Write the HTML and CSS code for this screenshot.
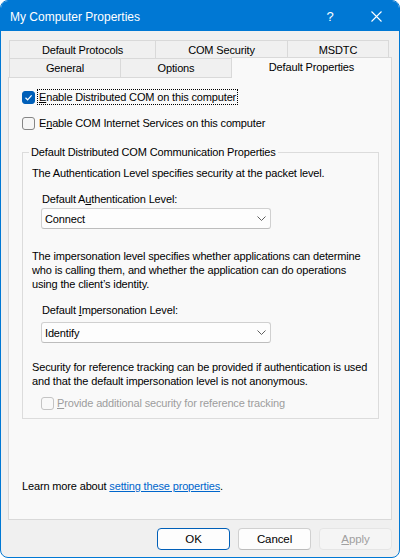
FILE: index.html
```html
<!DOCTYPE html>
<html>
<head>
<meta charset="utf-8">
<title>My Computer Properties</title>
<link rel="stylesheet" href="styles.css">
</head>
<body>
<div class="window">
  <div class="titlebar">
    <span class="title">My Computer Properties</span>
    <span class="cap-btn help">?</span>
    <span class="cap-btn close"><svg width="11" height="11" viewBox="0 0 11 11"><path d="M0.5 0.5 L10.5 10.5 M10.5 0.5 L0.5 10.5" stroke="#ffffff" stroke-width="1.1" fill="none"/></svg></span>
  </div>

  <div class="tabs">
    <div class="tabrow row1">
      <div class="tab t-protocols">Default Protocols</div>
      <div class="tab t-security">COM Security</div>
      <div class="tab t-msdtc">MSDTC</div>
    </div>
    <div class="tabrow row2">
      <div class="tab t-general">General</div>
      <div class="tab t-options">Options</div>
      <div class="tab t-default selected">Default Properties</div>
    </div>
  </div>

  <div class="panel">
    <div class="check-row first">
      <span class="cb checked"><svg width="11" height="11" viewBox="0 0 11 11"><path d="M2.5 5.8 L4.6 7.8 L8.6 3.3" stroke="#ffffff" stroke-width="1.2" fill="none"/></svg></span>
      <span class="cb-label focus"><u>E</u>nable Distributed COM on this computer</span>
    </div>
    <div class="check-row second">
      <span class="cb"></span>
      <span class="cb-label">E<u>n</u>able COM Internet Services on this computer</span>
    </div>

    <fieldset class="group">
      <legend>Default Distributed COM Communication Properties</legend>
      <div class="group-body">
        <p class="text p-auth">The Authentication Level specifies security at the packet level.</p>
        <div class="field-label l-auth">Default A<u>u</u>thentication Level:</div>
        <div class="select s-auth">
          <span>Connect</span>
          <svg class="chev" width="9" height="5" viewBox="0 0 9 5"><path d="M0.5 0.5 L4.5 4.5 L8.5 0.5" stroke="#5f5f5f" stroke-width="1" fill="none"/></svg>
        </div>
        <p class="text p-imp">The impersonation level specifies whether applications can determine<br>who is calling them, and whether the application can do operations<br>using the client’s identity.</p>
        <div class="field-label l-imp">Default <u>I</u>mpersonation Level:</div>
        <div class="select s-imp">
          <span>Identify</span>
          <svg class="chev" width="9" height="5" viewBox="0 0 9 5"><path d="M0.5 0.5 L4.5 4.5 L8.5 0.5" stroke="#5f5f5f" stroke-width="1" fill="none"/></svg>
        </div>
        <p class="text p-sec">Security for reference tracking can be provided if authentication is used<br>and that the default impersonation level is not anonymous.</p>
        <div class="check-row disabled">
          <span class="cb"></span>
          <span class="cb-label"><u>P</u>rovide additional security for reference tracking</span>
        </div>
      </div>
    </fieldset>

    <p class="learn">Learn more about <a class="link" href="#">setting these properties</a>.</p>
  </div>

  <div class="buttons">
    <button class="btn default">OK</button>
    <button class="btn">Cancel</button>
    <button class="btn disabled"><u>A</u>pply</button>
  </div>
</div>
</body>
</html>
```

FILE: styles.css
```css
html, body {
  margin: 0;
  padding: 0;
  background: #ffffff;
}

body {
  font-family: "Liberation Sans", Arial, sans-serif;
  font-size: 11px;
  letter-spacing: -0.15px;
  color: #000000;
}

.window {
  width: 400px;
  height: 558px;
  box-sizing: border-box;
  border: 1px solid #0078d4;
  border-radius: 8px;
  overflow: hidden;
  background: #f0f0f0;
  display: flex;
  flex-direction: column;
}

/* Title bar */
.titlebar {
  height: 30px;
  background: #0078d4;
  color: #ffffff;
  display: flex;
  align-items: center;
  flex: none;
}

.title {
  padding-left: 9px;
  font-size: 12px;
  letter-spacing: 0;
  line-height: 14px;
  padding-top: 1px;
}

.cap-btn {
  width: 46px;
  height: 30px;
  display: flex;
  align-items: center;
  justify-content: center;
}

.help {
  margin-left: auto;
  font-size: 13px;
  letter-spacing: 0;
}

.close svg {
  display: block;
}

/* Tabs */
.tabs {
  flex: none;
  margin: 9px 0 0 8px;
}

.tabrow {
  display: flex;
}

.row1 {
  height: 18px;
}

.row2 {
  height: 19px;
}

.tab {
  box-sizing: border-box;
  border: 1px solid #d9d9d9;
  border-bottom: none;
  background: #f0f0f0;
  display: flex;
  align-items: center;
  justify-content: center;
  line-height: 14px;
  margin-left: -1px;
}

.tab:first-child {
  margin-left: 0;
}

.t-protocols { width: 147px; }
.t-security { width: 133px; }
.t-msdtc { width: 102px; }
.t-general { width: 112px; }
.t-options { width: 112px; }

.t-default {
  width: 161px;
}

.tab.selected {
  position: relative;
  z-index: 1;
  height: 21px;
  margin-top: -1px;
  background: #f9f9f9;
  padding-bottom: 3px;
}

/* Panel */
.panel {
  flex: 1;
  margin: 0 7px;
  border: 1px solid #d9d9d9;
  background: #f9f9f9;
  padding: 11px 11px 0 13px;
  display: flex;
  flex-direction: column;
  min-height: 0;
}

.check-row {
  display: flex;
  align-items: center;
  height: 16px;
}

.check-row.second {
  margin-top: 10px;
}

.cb {
  width: 13px;
  height: 13px;
  box-sizing: border-box;
  border: 1px solid #858585;
  border-radius: 3px;
  background: #f6f6f6;
  flex: none;
  display: flex;
  align-items: center;
  justify-content: center;
}

.cb.checked {
  background: #005fb8;
  border-color: #005fb8;
}

.cb svg {
  display: block;
}

.cb-label {
  margin-left: 2px;
  padding: 0 1px;
  border: 1px solid transparent;
  line-height: 14px;
  white-space: nowrap;
}

.cb-label.focus {
  border: 1px dotted #000000;
}

/* Group box */
.group {
  margin: 14px 0 0 0;
  padding: 0;
  width: 357px;
  box-sizing: border-box;
  border: 1px solid #dcdcdc;
  min-width: 0;
}

.group legend {
  margin-left: 6px;
  padding: 0 2px;
  line-height: 14px;
  font-size: 11px;
}

.group-body {
  padding: 0 9px 7px 9px;
}

.text {
  margin: 0;
  line-height: 14px;
  white-space: nowrap;
}

.p-auth { margin-top: 7px; }
.p-imp { margin-top: 20px; }
.p-sec { margin-top: 17px; }

.field-label {
  line-height: 14px;
  margin-left: 10px;
}

.l-auth { margin-top: 12px; }
.l-imp { margin-top: 12px; }

.select {
  margin-left: 9px;
  width: 230px;
  height: 21px;
  box-sizing: border-box;
  border: 1px solid #d0d0d0;
  border-bottom-color: #bdbdbd;
  border-radius: 3px;
  background: #fdfdfd;
  display: flex;
  align-items: center;
  justify-content: space-between;
  padding: 0 4px 0 3px;
  line-height: 14px;
}

.s-auth { margin-top: 2px; }
.s-imp { margin-top: 5px; }

.chev {
  display: block;
}

.check-row.disabled {
  margin-top: 7px;
  margin-left: 9px;
}

.check-row.disabled .cb {
  border-color: #c4c4c4;
  background: #f9f9f9;
}

.check-row.disabled .cb-label {
  color: #9d9d9d;
  margin-left: 1px;
}

/* Learn more */
.learn {
  margin: 60px 0 0 0;
  line-height: 14px;
}

.link {
  color: #0066cc;
  text-decoration: underline;
}

/* Buttons */
.buttons {
  flex: none;
  display: flex;
  justify-content: flex-end;
  gap: 8px;
  margin: 8px 7px 7px 0;
}

.btn {
  width: 73px;
  height: 22px;
  box-sizing: border-box;
  border: 1px solid #d0d0d0;
  border-bottom-color: #bcbcbc;
  border-radius: 4px;
  background: #fdfdfd;
  font-family: "Liberation Sans", Arial, sans-serif;
  font-size: 11.5px;
  letter-spacing: -0.1px;
  color: #000000;
  padding: 0;
  line-height: 14px;
}

.btn.default {
  border-color: #005fb8;
}

.btn.disabled {
  background: #f5f5f5;
  border-color: #e5e5e5;
  color: #a0a0a0;
}
```
